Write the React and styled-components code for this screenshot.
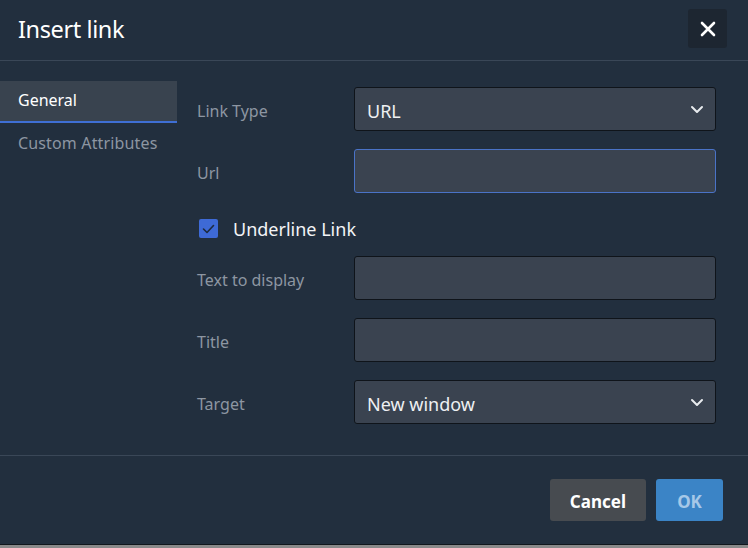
import React from "react";
import styled, { createGlobalStyle } from "styled-components";

const GlobalStyle = createGlobalStyle`
  html, body {
    margin: 0;
    padding: 0;
    background: #8a8a8a;
  }
  * { box-sizing: border-box; }
  body {
    font-family: "Noto Sans", "Open Sans", sans-serif;
  }
`;

const fields = [
  { label: "Text to display", type: "input" },
  { label: "Title", type: "input" },
  { label: "Target", type: "select", value: "New window" },
];

function Chevron() {
  return (
    <svg width="14" height="9" viewBox="0 0 14 9" fill="none">
      <path d="M2 2l5 5 5-5" stroke="#e8ebee" strokeWidth="2" strokeLinecap="round" strokeLinejoin="round" />
    </svg>
  );
}

function Field({ label, type, value, focused }) {
  return (
    <Row>
      <Label>{label}</Label>
      {type === "select" ? (
        <SelectBox>
          <SelectValue>{value}</SelectValue>
          <Chevron />
        </SelectBox>
      ) : (
        <TextInput $focused={focused} />
      )}
    </Row>
  );
}

export default function App() {
  return (
    <>
      <GlobalStyle />
      <Dialog>
        <Header>
          <Title>Insert link</Title>
          <CloseButton aria-label="Close">
            <svg width="16" height="16" viewBox="0 0 16 16">
              <path d="M2 2l12 12M14 2L2 14" stroke="#ffffff" strokeWidth="2.6" strokeLinecap="round" />
            </svg>
          </CloseButton>
        </Header>

        <Body>
          <Nav>
            <Tab $active>General</Tab>
            <Tab>Custom Attributes</Tab>
          </Nav>

          <Form>
            <Field label="Link Type" type="select" value="URL" />
            <Field label="Url" type="input" focused />
            <CheckRow>
              <CheckBox>
                <svg width="13" height="10" viewBox="0 0 13 10" fill="none">
                  <path d="M1.5 5l3.5 3.5L11.5 1.5" stroke="#1d2b3f" strokeWidth="1.6" strokeLinecap="round" strokeLinejoin="round" />
                </svg>
              </CheckBox>
              <CheckLabel>Underline Link</CheckLabel>
            </CheckRow>
            {fields.map((f) => (
              <Field key={f.label} {...f} />
            ))}
          </Form>
        </Body>

        <Footer>
          <Button $variant="secondary">Cancel</Button>
          <Button $variant="primary">OK</Button>
        </Footer>
      </Dialog>
    </>
  );
}

const Dialog = styled.div`
  width: 748px;
  height: 545px;
  background: #222f3e;
  border-bottom: 1px solid #12171d;
  display: flex;
  flex-direction: column;
`;

const Header = styled.div`
  height: 61px;
  flex-shrink: 0;
  display: flex;
  align-items: center;
  justify-content: space-between;
  padding: 0 21px 0 18px;
  border-bottom: 1px solid #3a4757;
`;

const Title = styled.h1`
  margin: 0 0 2px;
  font-size: 23.5px;
  font-weight: 400;
  color: #ffffff;
  letter-spacing: -0.4px;
`;

const CloseButton = styled.button`
  width: 39px;
  height: 39px;
  margin-top: -3px;
  border: none;
  border-radius: 3px;
  background: #1d2631;
  display: flex;
  align-items: center;
  justify-content: center;
  padding: 0;
`;

const Body = styled.div`
  flex: 1;
  display: flex;
  gap: 20px;
  padding-top: 20px;
  border-bottom: 1px solid #3a4757;
`;

const Nav = styled.div`
  width: 177px;
  flex-shrink: 0;
  display: flex;
  flex-direction: column;
`;

const Tab = styled.div`
  height: 42px;
  padding: ${(p) => (p.$active ? "0 0 3px 18px" : "0 0 1px 18px")};
  display: flex;
  align-items: center;
  font-size: 16px;
  letter-spacing: ${(p) => (p.$active ? "0" : "0.15px")};
  color: ${(p) => (p.$active ? "#ffffff" : "#8d96a2")};
  background: ${(p) => (p.$active ? "#39434f" : "transparent")};
  border-bottom: 2px solid ${(p) => (p.$active ? "#3f6fd4" : "transparent")};
`;

const Form = styled.div`
  flex: 1;
  padding: 6px 32px 0 0;
  display: flex;
  flex-direction: column;
  gap: 18px;
`;

const Row = styled.div`
  display: flex;
  align-items: center;
`;

const Label = styled.div`
  width: 157px;
  flex-shrink: 0;
  padding-top: 3px;
  font-size: 16px;
  color: #8d96a2;
`;

const fieldBase = `
  flex: 1;
  height: 44px;
  border-radius: 3px;
  background: #3a4350;
`;

const TextInput = styled.input`
  ${fieldBase}
  border: 1px solid ${(p) => (p.$focused ? "#4a73c7" : "#0f141a")};
  outline: none;
  padding: 0 12px;
`;

const SelectBox = styled.div`
  ${fieldBase}
  border: 1px solid #0f141a;
  display: flex;
  align-items: center;
  justify-content: space-between;
  padding: 0 11px 0 12px;
  font-size: 18px;
  color: #eef0f2;
`;

const SelectValue = styled.span`
  padding-top: 3px;
`;

const CheckRow = styled.div`
  height: 27px;
  padding: 8px 0 0 2px;
  display: flex;
  align-items: center;
  gap: 15px;
`;

const CheckBox = styled.div`
  width: 19px;
  height: 19px;
  border-radius: 2px;
  background: #3e6ad6;
  display: flex;
  align-items: center;
  justify-content: center;
`;

const CheckLabel = styled.span`
  font-size: 18px;
  color: #f3f4f6;
`;

const Footer = styled.div`
  height: 88px;
  flex-shrink: 0;
  display: flex;
  justify-content: flex-end;
  align-items: flex-start;
  gap: 10px;
  padding: 23px 25px 0 0;
`;

const Button = styled.button`
  height: 42px;
  border: none;
  border-radius: 3px;
  font-family: inherit;
  font-size: 17px;
  font-weight: 700;
  padding: 3px 20px 0;
  background: ${(p) => (p.$variant === "primary" ? "#3b84c6" : "#474b50")};
  color: ${(p) => (p.$variant === "primary" ? "#a6c8e8" : "#ffffff")};
  min-width: ${(p) => (p.$variant === "primary" ? "67px" : "96px")};
`;
